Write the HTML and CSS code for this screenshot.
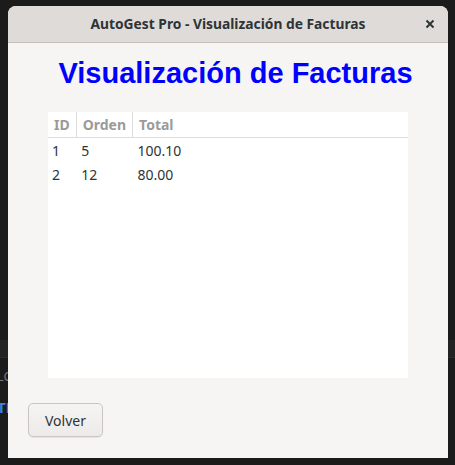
FILE: index.html
```html
<!DOCTYPE html>
<html lang="es">
<head>
<meta charset="utf-8">
<title>AutoGest Pro</title>
<link rel="stylesheet" href="styles.css">
</head>
<body>
<div class="desktop">
  <div class="behind">
    <span class="b1">LC</span>
    <span class="b2">TF</span>
  </div>
  <div class="window">
    <header class="titlebar">
      <span class="title">AutoGest Pro - Visualización de Facturas</span>
      <button class="close" aria-label="Cerrar">
        <svg width="10" height="10" viewBox="0 0 10 10"><path d="M1.5 1.5 L8.5 8.5 M8.5 1.5 L1.5 8.5" stroke="#2e3436" stroke-width="2" stroke-linecap="butt"/></svg>
      </button>
    </header>
    <main class="content">
      <h1 class="heading">Visualización de Facturas</h1>
      <div class="tablebox">
        <table class="grid">
          <thead>
            <tr><th class="c-id">ID</th><th class="c-ord">Orden</th><th class="c-tot">Total</th></tr>
          </thead>
          <tbody>
            <tr><td>1</td><td>5</td><td>100.10</td></tr>
            <tr><td>2</td><td>12</td><td>80.00</td></tr>
          </tbody>
        </table>
      </div>
      <div class="actions">
        <button class="btn">Volver</button>
      </div>
    </main>
  </div>
</div>
</body>
</html>
```

FILE: styles.css
```css
* { box-sizing: border-box; }
html, body { margin: 0; padding: 0; }
body {
  width: 455px;
  height: 465px;
  background: #1b1b1b;
  overflow: hidden;
  font-family: "Noto Sans", "DejaVu Sans", sans-serif;
}
.desktop {
  position: relative;
  width: 455px;
  height: 465px;
  padding: 6px 7px 0 8px;
}
.behind {
  position: absolute;
  left: 0;
  top: 340px;
  width: 455px;
  height: 125px;
}
.behind::before {
  content: "";
  position: absolute;
  left: 0; right: 0; top: 0;
  height: 17px;
  background: #232323;
  border-bottom: 1px solid #2c2c2c;
}
.b1, .b2 {
  position: absolute;
  left: -3px;
  font-size: 13px;
  font-weight: bold;
}
.b1 { top: 27px; color: #777; font-weight: normal; }
.b2 { top: 57px; color: #3584e4; font-size: 15px; }
.window {
  position: relative;
  width: 440px;
  height: 452px;
  background: #f6f5f4;
  border-radius: 8px 8px 0 0;
  display: flex;
  flex-direction: column;
  overflow: hidden;
}
.titlebar {
  height: 37px;
  flex: none;
  background: #dedbd8;
  border-bottom: 1px solid #c4c1bd;
  display: flex;
  align-items: center;
  justify-content: center;
  position: relative;
}
.title {
  font-size: 13.8px;
  font-weight: bold;
  color: #2e3436;
  padding-bottom: 1px;
}
.close {
  position: absolute;
  right: 13px;
  top: 13px;
  width: 10px;
  height: 10px;
  padding: 0;
  border: 0;
  background: none;
  display: flex;
}
.content {
  flex: 1;
  display: flex;
  flex-direction: column;
}
.heading {
  margin: 0;
  height: 69px;
  padding-top: 14px;
  text-align: center;
  font-family: "Liberation Sans", Arial, sans-serif;
  font-weight: bold;
  font-size: 29px;
  line-height: 33px;
  color: #0000ff;
  padding-left: 15px;
}
.tablebox {
  margin: 0 40px;
  height: 266px;
  background: #ffffff;
}
.grid {
  width: 100%;
  border-collapse: collapse;
  font-size: 14px;
  color: #2e3436;
}
.grid th {
  font-weight: bold;
  color: #9a9b98;
  text-align: left;
  height: 25px;
  padding: 0 6px;
  border-bottom: 1px solid #dcdcdc;
}
.grid th + th { border-left: 1px solid #dcdcdc; }
.grid .c-id { width: 28px; }
.grid .c-ord { width: 56px; }
.grid td {
  height: 25px;
  padding: 0 6px 0 4px;
  vertical-align: middle;
}
.grid td + td { padding-left: 5px; }
.grid tbody tr:first-child td { padding-top: 2px; }
.actions {
  padding: 25px 0 0 20px;
}
.btn {
  width: 75px;
  height: 34px;
  border: 1px solid #c9c5c0;
  border-radius: 5px;
  background: linear-gradient(#f5f4f3, #edebe9);
  box-shadow: 0 1px 1px rgba(0,0,0,0.07);
  font-family: "Noto Sans", "DejaVu Sans", sans-serif;
  font-size: 14px;
  color: #2e3436;
  padding: 0;
}
```
